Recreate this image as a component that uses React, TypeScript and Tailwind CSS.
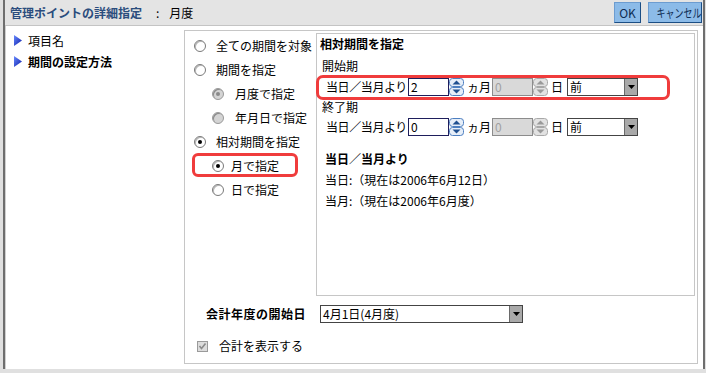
import React from 'react';

const JP = "font-['Noto_Sans_CJK_JP','Noto_Sans',sans-serif]";

const Radio = ({ checked = false, disabled = false }: { checked?: boolean; disabled?: boolean }) => (
  <span
    className={`relative inline-block w-[12px] h-[12px] rounded-full border shrink-0 ${
      disabled ? 'border-[#9a9a9a] bg-[#d4d4d4]' : 'border-[#7a7a7a] bg-white'
    }`}
    style={{ boxShadow: disabled ? 'inset 1px 1px 0 #8a8a8a' : 'inset 1px 1px 0 #b8b8b8' }}
  >
    {checked && (
      <span
        className={`absolute left-[3px] top-[3px] w-[4px] h-[4px] rounded-full ${
          disabled ? 'bg-[#8a8a8a]' : 'bg-black'
        }`}
      />
    )}
  </span>
);

const Spinner = ({ disabled = false }: { disabled?: boolean }) => {
  const stroke = disabled ? '#a8a8a8' : '#4d7fc0';
  const fill = disabled ? '#e2e2e2' : '#e6eef8';
  const arrow = disabled ? '#9a9a9a' : '#1f4f8f';
  return (
    <svg width="15" height="18" viewBox="0 0 15 18" className="shrink-0">
      <rect x="0.5" y="0.5" width="14" height="8" rx="3" fill={fill} stroke={stroke} />
      <rect x="0.5" y="9.5" width="14" height="8" rx="3" fill={fill} stroke={stroke} />
      <path d="M3.5 6.5 L7.5 2.5 L11.5 6.5 Z" fill={arrow} />
      <path d="M3.5 11.5 L7.5 15.5 L11.5 11.5 Z" fill={arrow} />
    </svg>
  );
};

const DropBtn = () => (
  <span className="w-[13px] h-full bg-[#a9a9a9] border-l border-[#6a6a6a] flex items-center justify-center">
    <svg width="7" height="4" viewBox="0 0 7 4">
      <path d="M0 0 L7 0 L3.5 4 Z" fill="#000" />
    </svg>
  </span>
);

const Select = ({ value, w }: { value: string; w: string }) => (
  <div className={`${w} h-[18px] flex items-stretch border border-[#444] bg-white shrink-0`}>
    <span className="flex-1 pl-[2px] text-[12px] leading-[16px] text-black whitespace-nowrap">{value}</span>
    <DropBtn />
  </div>
);

const PeriodRow = ({ months }: { months: string }) => (
  <div className="h-[22px] flex items-center pl-[9px] text-[12px] text-black whitespace-nowrap">
    <span className="w-[82px] shrink-0 tracking-[-0.4px]">当日／当月より</span>
    <div className="w-[41px] h-[18px] shrink-0 border border-[#1e1e5c] bg-white pl-[2px] text-[12px] leading-[16px]">{months}</div>
    <Spinner />
    <span className="ml-[3px] w-[25px] shrink-0">ヵ月</span>
    <div className="w-[41px] h-[18px] shrink-0 border border-[#8c8c8c] bg-[#d9d9d9] pl-[2px] text-[12px] leading-[16px] text-[#a0a0a0]">0</div>
    <Spinner disabled />
    <span className="ml-[3px] w-[16px] shrink-0">日</span>
    <Select value="前" w="w-[71px]" />
  </div>
);

export default function App() {
  return (
    <div className={`w-[706px] h-[373px] bg-[#e0e0e0] pl-[3px] pr-[1px] pb-[4px] ${JP}`}>
      <div className="h-full border-x-2 border-[#6e6e6e] flex flex-col">
        <div className="h-[26px] flex items-center border-b border-[#c4c4c4] bg-[#e4e4e4]">
          <span className="ml-[5px] text-[12px] font-bold text-[#2b4d7d]">管理ポイントの詳細指定</span>
          <span className="ml-[14px] text-[12px] text-black">:</span>
          <span className="ml-[10px] text-[12px] text-black">月度</span>
          <div className="ml-auto flex items-center gap-[7px] pr-[1px]">
            <button className="w-[27px] h-[21px] bg-[#8cbbe8] border border-[#6c9cd0] border-r-[#1c4e84] border-b-[#1c4e84] text-[12px] text-[#0e2c52] leading-none">
              OK
            </button>
            <button className="w-[54px] h-[21px] bg-[#8cbbe8] border border-[#6c9cd0] border-r-[#1c4e84] border-b-[#1c4e84] text-[12px] text-[#0e2c52] leading-none overflow-hidden">
              <span className="inline-block scale-x-75 whitespace-nowrap">キャンセル</span>
            </button>
          </div>
        </div>

        <div className="flex-1 bg-white flex border-l border-[#d0d0d0]">
          <div className="w-[178px] pt-[4px] pl-[8px] text-[12px] text-black">
            <div className="h-[21px] flex items-center gap-[6px]">
              <svg width="8" height="11" viewBox="0 0 8 11">
                <defs>
                  <linearGradient id="tg1" x1="0" y1="0" x2="1" y2="1">
                    <stop offset="0" stopColor="#6a8cff" />
                    <stop offset="1" stopColor="#0a1aa8" />
                  </linearGradient>
                </defs>
                <path d="M0 0 L8 5.5 L0 11 Z" fill="url(#tg1)" />
              </svg>
              <span>項目名</span>
            </div>
            <div className="h-[21px] flex items-center gap-[6px]">
              <svg width="8" height="11" viewBox="0 0 8 11">
                <path d="M0 0 L8 5.5 L0 11 Z" fill="url(#tg1)" />
              </svg>
              <span className="font-bold">期間の設定方法</span>
            </div>
          </div>

          <div className="w-[514px] mt-[4px] h-[334px] border border-[#c6c6c6] flex flex-col">
            <div className="flex pt-[2px] pr-[2px]">
              <div className="w-[131px] shrink-0 pt-[1px] text-[12px] text-black whitespace-nowrap">
                <div className="h-[24px] flex items-center pl-[9px] gap-[10px]">
                  <Radio />
                  <span>全ての期間を対象</span>
                </div>
                <div className="h-[24px] flex items-center pl-[9px] gap-[10px]">
                  <Radio />
                  <span>期間を指定</span>
                </div>
                <div className="h-[24px] flex items-center pl-[27px] gap-[11px]">
                  <Radio checked disabled />
                  <span>月度で指定</span>
                </div>
                <div className="h-[24px] flex items-center pl-[27px] gap-[11px]">
                  <Radio disabled />
                  <span>年月日で指定</span>
                </div>
                <div className="h-[24px] flex items-center pl-[9px] gap-[10px]">
                  <Radio checked />
                  <span>相対期間を指定</span>
                </div>
                <div className="relative h-[24px] flex items-center pl-[27px] gap-[7px]">
                  <Radio checked />
                  <span>月で指定</span>
                  <span className="absolute left-[7px] top-[-1px] w-[106px] h-[24px] border-[3px] border-[#f03c3c] rounded-[6px]" />
                </div>
                <div className="h-[24px] flex items-center pl-[27px] gap-[7px]">
                  <Radio />
                  <span>日で指定</span>
                </div>
              </div>

              <div className="flex-1 h-[263px] border border-[#c6c6c6] text-[12px] text-black whitespace-nowrap">
                <div className="h-[20px] flex items-center pl-[3px] font-bold">相対期間を指定</div>
                <div className="mt-[2px] h-[20px] flex items-center pl-[5px]">開始期</div>
                <div className="relative">
                  <PeriodRow months="2" />
                  <span className="absolute left-[-1px] top-[-1px] w-[354px] h-[25px] border-[3px] border-[#f03c3c] rounded-[7px]" />
                </div>
                <div className="h-[18px] flex items-center pl-[5px]">終了期</div>
                <PeriodRow months="0" />
                <div className="mt-[11px] h-[20px] flex items-center pl-[8px] font-bold">当日／当月より</div>
                <div className="h-[22px] flex items-center pl-[8px]">当日:（現在は2006年6月12日）</div>
                <div className="h-[20px] flex items-center pl-[8px]">当月:（現在は2006年6月度）</div>
              </div>
            </div>

            <div className="mt-[9px] h-[18px] flex items-center pl-[21px] text-[12px] text-black whitespace-nowrap">
              <span className="w-[114px] shrink-0 font-bold tracking-[0.5px]">会計年度の開始日</span>
              <Select value="4月1日(4月度)" w="w-[203px]" />
            </div>
            <div className="mt-[15px] h-[16px] flex items-center pl-[12px] gap-[11px] text-[12px] text-black">
              <span className="relative w-[11px] h-[11px] border border-[#9a9a9a] bg-[#dcdcdc]">
                <svg width="9" height="9" viewBox="0 0 9 9" className="absolute left-0 top-0">
                  <path d="M1.5 4 L3.5 6.5 L7.5 1.5" stroke="#8a8a8a" strokeWidth="1.6" fill="none" />
                </svg>
              </span>
              <span>合計を表示する</span>
            </div>
          </div>
        </div>
      </div>
    </div>
  );
}
